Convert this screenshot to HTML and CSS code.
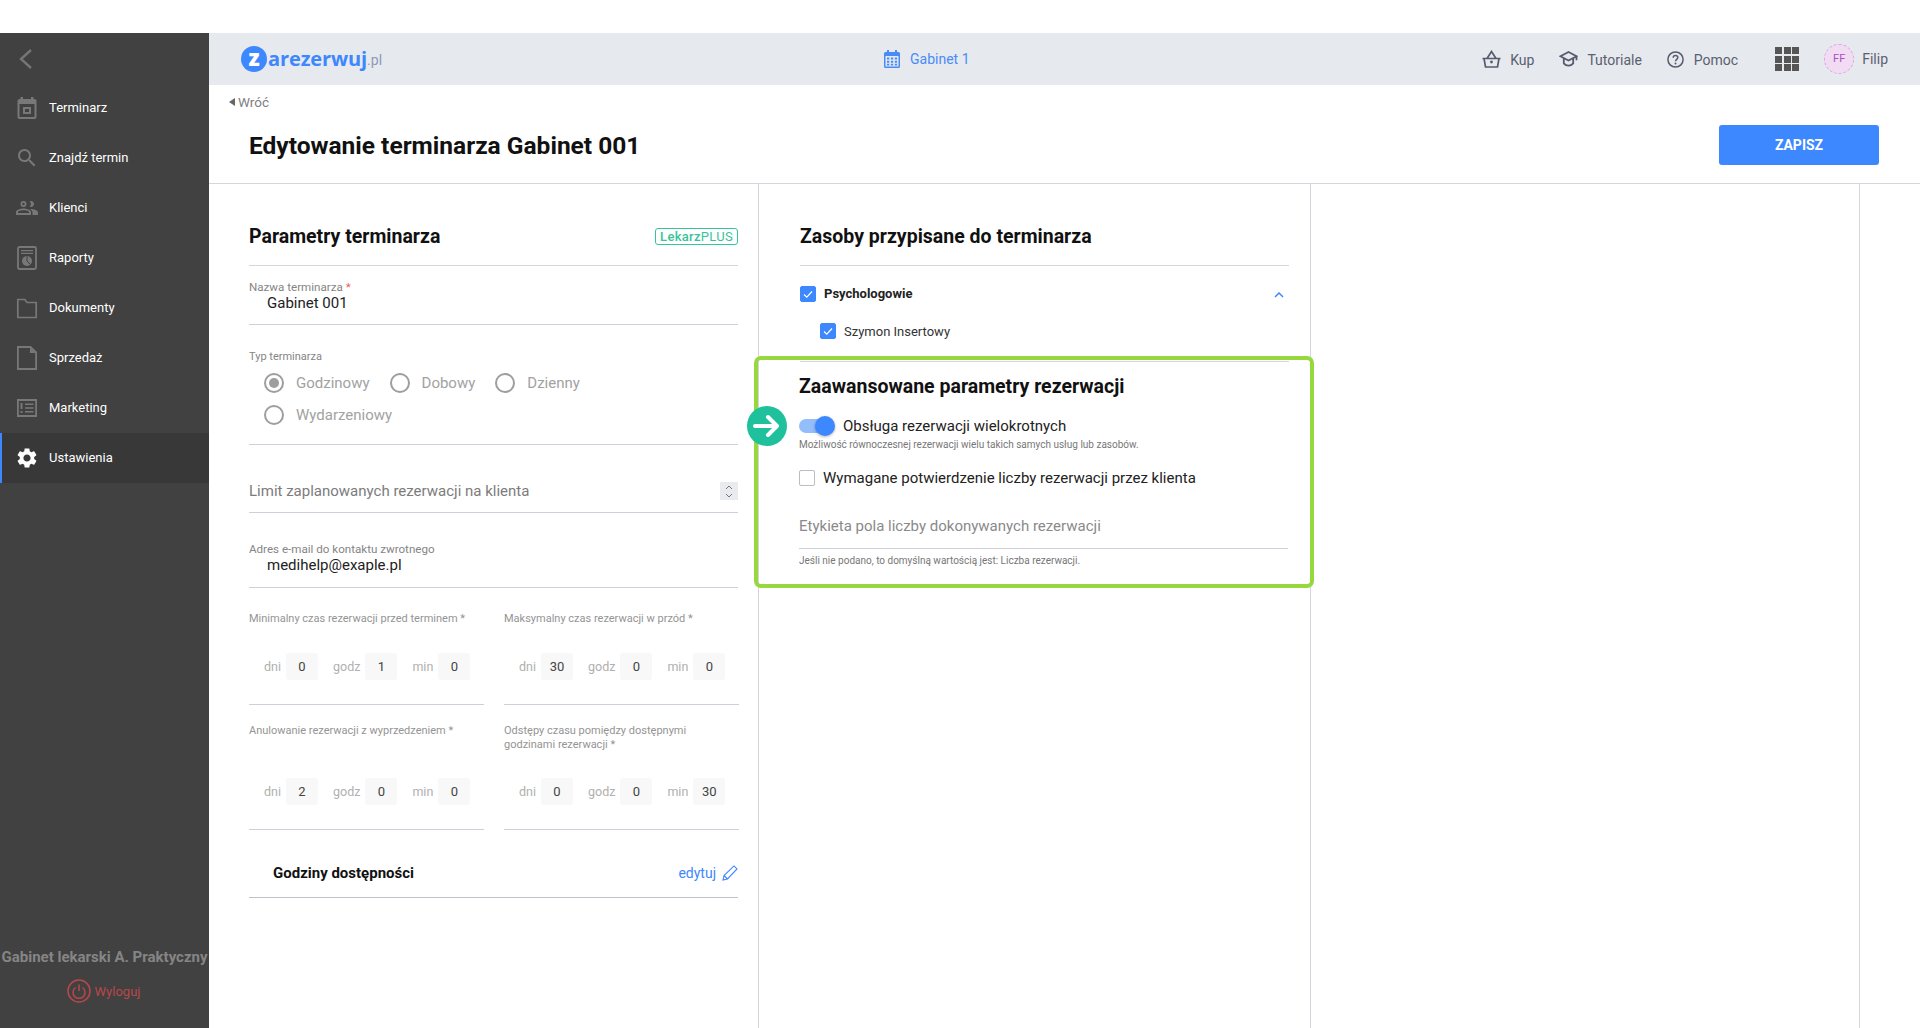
FILE: index.html
```html
<!DOCTYPE html>
<html lang="pl">
<head>
<meta charset="utf-8">
<title>Edytowanie terminarza</title>
<link rel="stylesheet" href="styles.css">
</head>
<body>
<div class="app">
  <aside class="sidebar">
    <div class="back">
      <svg width="16" height="22" viewBox="0 0 16 22"><path d="M13 2 3 11l10 9" fill="none" stroke="#757575" stroke-width="2.400"/></svg>
    </div>
    <nav class="nav">
      <a class="nav-item"><svg class="nav-icon" viewBox="0 0 24 24"><path fill="#787878" d="M16 1v2H8V1H5.500v2H4.600C3.200 3 2.500 4 2.500 5v16c0 1.100.9 2 2 2h15c1.100 0 2-.9 2-2V5c0-1.100-.9-2-2-2h-1V1h-2.500zm3.500 20h-15V8h15v13zM8 11h8v7H8v-7zm2 2v3h4v-3h-4z"/></svg><span>Terminarz</span></a>
      <a class="nav-item"><svg class="nav-icon" viewBox="0 0 24 24"><path fill="#787878" d="M15.500 14h-.79l-.28-.27C15.410 12.590 16 11.110 16 9.500 16 5.910 13.090 3 9.500 3S3 5.910 3 9.500 5.910 16 9.500 16c1.610 0 3.090-.59 4.230-1.570l.27.280v.79l5 4.990L20.490 19l-4.990-5zm-6 0C7.010 14 5 11.990 5 9.500S7.010 5 9.500 5 14 7.010 14 9.500 11.990 14 9.500 14z"/></svg><span>Znajdź termin</span></a>
      <a class="nav-item"><svg class="nav-icon" viewBox="0 0 24 24"><path fill="#787878" d="M16 11c1.660 0 2.990-1.340 2.990-3S17.660 5 16 5c-.5 0-1 .12-1.400.34.800.7 1.300 1.600 1.300 2.660s-.5 2-1.300 2.660c.4.220.9.340 1.400.340zM8.500 11a3 3 0 1 0 0-6 3 3 0 0 0 0 6zm0-1.800a1.200 1.200 0 1 1 0-2.400 1.200 1.200 0 0 1 0 2.400zm0 3.300c-2.500 0-7.500 1.200-7.500 3.600V19h15v-2.900c0-2.400-5-3.600-7.500-3.600zm-5.500 4.500v-.9c0-1 3.200-1.800 5.500-1.800s5.500.8 5.500 1.800v.9H3zm13-4c-.3 0-.6 0-1 .05 1.200.850 2.500 1.900 2.500 3.450V19h5.500v-2.500c0-2.330-4.670-3.500-7-3.500z"/></svg><span>Klienci</span></a>
      <a class="nav-item"><svg class="nav-icon" viewBox="0 0 24 24"><rect x="3" y="1" width="18" height="22" rx="1.500" fill="none" stroke="#787878" stroke-width="1.800"/><path fill="#787878" d="M6 4h12v1.300H6zM6 6.800h12v1.300H6z"/><circle cx="12" cy="15" r="5" fill="#787878"/><path d="M12 15v-5M12 15l3.500 3.500" stroke="#414141" fill="none"/></svg><span>Raporty</span></a>
      <a class="nav-item"><svg class="nav-icon" viewBox="0 0 24 24"><path fill="none" stroke="#787878" stroke-width="1.700" d="M2.800 3.500h7l2.200 3h9.200V21.500H2.800z"/></svg><span>Dokumenty</span></a>
      <a class="nav-item"><svg class="nav-icon" viewBox="0 0 24 24"><path fill="none" stroke="#787878" stroke-width="1.800" d="M2.900 1h12.600L21.100 6.500V23H2.900z"/><path fill="#787878" d="M15 1.500 20.500 7H15z"/></svg><span>Sprzedaż</span></a>
      <a class="nav-item"><svg class="nav-icon" viewBox="0 0 24 24"><path fill="none" stroke="#787878" stroke-width="1.800" d="M2.900 4h18.200v16H2.900z"/><path fill="#787878" d="M5.500 7h2v6h-2zM5.500 15h2v2h-2zM10 7.500h8.500V9H10zM10 11.300h8.500v1.500H10zM10 15h8.500v1.500H10z"/></svg><span>Marketing</span></a>
      <a class="nav-item nav-item-active"><svg class="nav-icon" viewBox="0 0 24 24"><path fill="#fff" d="M19.140 12.940c.04-.3.06-.61.06-.94 0-.32-.02-.64-.07-.94l2.030-1.580c.18-.14.23-.41.12-.61l-1.920-3.320c-.12-.22-.37-.29-.59-.22l-2.390.96c-.5-.38-1.030-.7-1.620-.94l-.36-2.540c-.04-.24-.24-.41-.48-.41h-3.840c-.24 0-.43.17-.47.41l-.36 2.540c-.59.24-1.130.57-1.620.94l-2.390-.96c-.22-.08-.47 0-.59.22L2.740 8.870c-.12.21-.08.47.12.61l2.030 1.580c-.05.3-.09.63-.09.94s.02.64.07.94l-2.030 1.580c-.18.14-.23.41-.12.61l1.920 3.320c.12.22.37.29.59.22l2.390-.96c.5.38 1.030.7 1.620.94l.36 2.540c.05.24.24.41.48.41h3.840c.24 0 .44-.17.47-.41l.36-2.540c.59-.24 1.130-.56 1.620-.94l2.390.96c.22.08.47 0 .59-.22l1.920-3.320c.12-.22.07-.47-.12-.61l-2.010-1.580zM12 15.600c-1.980 0-3.600-1.620-3.600-3.600s1.620-3.600 3.600-3.600 3.600 1.620 3.600 3.600-1.620 3.600-3.600 3.600z"/></svg><span>Ustawienia</span></a>
    </nav>
    <div class="side-foot">
      <div class="clinic">Gabinet lekarski A. Praktyczny</div>
      <div class="logout">
        <svg width="24" height="24" viewBox="0 0 24 24"><circle cx="12" cy="12" r="11" fill="none" stroke="#b9474b" stroke-width="1.500"/><path d="M8.500 8.500a6 6 0 1 0 7 0M12 5.500V12" fill="none" stroke="#b9474b" stroke-width="1.500"/></svg>
        <span>Wyloguj</span>
      </div>
    </div>
  </aside>

  <div class="main">
    <header class="topbar">
      <div class="logo">
        <span class="logo-z">z</span><span class="logo-text">arezerwuj</span><span class="logo-pl">.pl</span>
      </div>
      <div class="current">
        <svg width="16" height="18" viewBox="0 0 16 18"><path fill="#4a8cf7" d="M3 0h2v2h6V0h2v2h1.500A1.500 1.500 0 0 1 16 3.500v13a1.500 1.500 0 0 1-1.500 1.500h-13A1.500 1.500 0 0 1 0 16.500v-13A1.500 1.500 0 0 1 1.500 2H3V0zM1.500 6v10.500h13V6h-13z"/><path fill="#4a8cf7" d="M3 7.500h2.300v2H3zM6.900 7.500h2.300v2H6.900zM10.800 7.500h2.300v2h-2.300zM3 10.700h2.300v2H3zM6.900 10.700h2.300v2H6.900zM10.800 10.700h2.300v2h-2.300zM3 13.800h2.300v1.700H3zM6.900 13.800h2.300v1.700H6.900zM10.800 13.800h2.300v1.700h-2.300z"/></svg>
        <span>Gabinet 1</span>
      </div>
      <div class="tools">
        <a class="tool tool-kup">
          <svg width="19" height="18" viewBox="0 0 19 18"><path d="M.5 8.500h18M2 8.500l1.500 8.500h12L17 8.500M5 8.500 9.500 1.500 14 8.500" fill="none" stroke="#565c6e" stroke-width="1.700"/><circle cx="9.500" cy="12" r="1.400" fill="#565c6e"/></svg>
          <span>Kup</span>
        </a>
        <a class="tool tool-tut">
          <svg width="19" height="18" viewBox="0 0 19 18"><path d="M9.500 2 1.500 6.300l8 4.300 8-4.300zM4.800 8.400v5c1.200 1.500 3 2.300 4.700 2.300s3.500-.8 4.700-2.300v-5M17.500 6.300v4" fill="none" stroke="#565c6e" stroke-width="1.800"/></svg>
          <span>Tutoriale</span>
        </a>
        <a class="tool tool-help">
          <svg width="17" height="17" viewBox="0 0 17 17"><circle cx="8.500" cy="8.500" r="7.600" fill="none" stroke="#565c6e" stroke-width="1.500"/><path d="M6.200 6.700c0-1.300 1-2.200 2.300-2.200s2.300.9 2.300 2.100c0 1.800-2.300 1.700-2.300 3.600" fill="none" stroke="#565c6e" stroke-width="1.500"/><circle cx="8.500" cy="12.400" r="1" fill="#565c6e"/></svg>
          <span>Pomoc</span>
        </a>
        <div class="apps"><i></i><i></i><i></i><i></i><i></i><i></i><i></i><i></i><i></i></div>
        <div class="avatar">FF</div>
        <span class="user">Filip</span>
      </div>
    </header>

    <div class="page-head">
      <a class="back-link"><span class="back-caret"></span>Wróć</a>
      <div class="title-row">
        <h1>Edytowanie terminarza Gabinet 001</h1>
        <button class="save">ZAPISZ</button>
      </div>
    </div>

    <div class="columns">
      <section class="col col-params">
        <div class="sec-head">
          <h2>Parametry terminarza</h2>
          <span class="badge"><b>Lekarz</b>PLUS</span>
        </div>
        <div class="field field-name">
          <div class="lbl lbl-lg">Nazwa terminarza <em>*</em></div>
          <div class="val">Gabinet 001</div>
        </div>
        <div class="field field-type">
          <div class="lbl">Typ terminarza</div>
          <div class="radios">
            <span class="radio radio-on"><i></i>Godzinowy</span>
            <span class="radio"><i></i>Dobowy</span>
            <span class="radio"><i></i>Dzienny</span>
            <span class="radio"><i></i>Wydarzeniowy</span>
          </div>
        </div>
        <div class="field field-limit">
          <span>Limit zaplanowanych rezerwacji na klienta</span>
          <span class="stepper">
            <svg width="10" height="15" viewBox="0 0 10 15"><path d="M2 5l3-3 3 3M2 10l3 3 3-3" fill="none" stroke="#777" stroke-width="1"/></svg>
          </span>
        </div>
        <div class="field field-mail">
          <div class="lbl lbl-lg">Adres e-mail do kontaktu zwrotnego</div>
          <div class="val">medihelp@exaple.pl</div>
        </div>
        <div class="times">
          <div class="time time-a">
            <div class="lbl">Minimalny czas rezerwacji przed terminem *</div>
            <div class="dhm"><span>dni</span><b>0</b><span>godz</span><b>1</b><span>min</span><b>0</b></div>
          </div>
          <div class="time time-a">
            <div class="lbl">Maksymalny czas rezerwacji w przód *</div>
            <div class="dhm"><span>dni</span><b>30</b><span>godz</span><b>0</b><span>min</span><b>0</b></div>
          </div>
          <div class="time">
            <div class="lbl">Anulowanie rezerwacji z wyprzedzeniem *</div>
            <div class="dhm"><span>dni</span><b>2</b><span>godz</span><b>0</b><span>min</span><b>0</b></div>
          </div>
          <div class="time">
            <div class="lbl">Odstępy czasu pomiędzy dostępnymi godzinami rezerwacji *</div>
            <div class="dhm"><span>dni</span><b>0</b><span>godz</span><b>0</b><span>min</span><b>30</b></div>
          </div>
        </div>
        <div class="hours">
          <strong>Godziny dostępności</strong>
          <a class="edit">edytuj
            <svg width="16" height="16" viewBox="0 0 16 16"><path d="M1 15l1-4.500L12 .9l3 3L5.500 14zM2 10.500 5.500 14" fill="none" stroke="#3d87ff" stroke-width="1.100"/></svg>
          </a>
        </div>
      </section>

      <section class="col col-res">
        <div class="sec-head"><h2>Zasoby przypisane do terminarza</h2></div>
        <div class="group-row">
          <span class="check check-on"><svg width="16" height="16" viewBox="0 0 16 16"><path d="M4 8.500l2.800 2.700L12 5.500" fill="none" stroke="#fff" stroke-width="1.200"/></svg></span>
          <strong>Psychologowie</strong>
          <svg class="chev" width="10" height="6" viewBox="0 0 10 6"><path d="M1 5l4-4 4 4" fill="none" stroke="#3d87ff" stroke-width="1.500"/></svg>
        </div>
        <div class="child-row">
          <span class="check check-on"><svg width="16" height="16" viewBox="0 0 16 16"><path d="M4 8.500l2.800 2.700L12 5.500" fill="none" stroke="#fff" stroke-width="1.200"/></svg></span>
          <span>Szymon Insertowy</span>
        </div>
        <div class="divider"></div>
        <div class="adv">
          <h2 class="adv-title">Zaawansowane parametry rezerwacji</h2>
          <div class="toggle-row">
            <span class="toggle"><i></i></span>
            <span>Obsługa rezerwacji wielokrotnych</span>
          </div>
          <div class="sub">Możliwość równoczesnej rezerwacji wielu takich samych usług lub zasobów.</div>
          <div class="confirm-row">
            <span class="check"></span>
            <span>Wymagane potwierdzenie liczby rezerwacji przez klienta</span>
          </div>
          <div class="adv-input">Etykieta pola liczby dokonywanych rezerwacji</div>
          <div class="hint">Jeśli nie podano, to domyślną wartością jest: Liczba rezerwacji.</div>
        </div>
        <div class="highlight"></div>
        <div class="arrow">
          <svg width="28" height="24" viewBox="0 0 28 24"><path d="M2 12h22M15 3l9 9-9 9" fill="none" stroke="#fff" stroke-width="4" stroke-linecap="round" stroke-linejoin="round"/></svg>
        </div>
      </section>

      <section class="col col-empty"></section>
      <section class="col-rest"></section>
    </div>
  </div>
</div>
</body>
</html>
```

FILE: styles.css
```css
* { box-sizing: border-box; }
html, body { margin: 0; height: 100%; }
body { background: #fff; font-family: Roboto, "Liberation Sans", sans-serif; color: #222; overflow: hidden; }
h1, h2 { margin: 0; }
a { color: inherit; text-decoration: none; }

.app { display: flex; height: 1028px; padding-top: 33px; }

/* sidebar */
.sidebar { width: 209px; flex: none; background: #414141; display: flex; flex-direction: column; }
.back { height: 50px; padding: 2px 0 0 18px; display: flex; align-items: center; }
.nav { display: flex; flex-direction: column; }
.nav-item { height: 50px; display: flex; align-items: center; padding-left: 15px; gap: 10px; color: #fff; font-size: 13px; }
.nav-item span { padding-bottom: 2px; }
.nav-icon { width: 24px; height: 24px; flex: none; }
.nav-item-active { background: #383838; border-left: 2px solid #3d87ff; padding-left: 13px; }
.side-foot { margin-top: auto; padding-bottom: 24px; text-align: center; }
.clinic { color: #858585; font-size: 15px; font-weight: 700; line-height: 20px; white-space: nowrap; }
.logout { margin-top: 11px; margin-left: -2px; display: flex; justify-content: center; align-items: center; gap: 4px; color: #b9474b; font-size: 13px; height: 26px; }

/* main */
.main { flex: 1; min-width: 0; display: flex; flex-direction: column; }
.topbar { height: 52px; flex: none; background: #e6e9ee; display: flex; align-items: center; padding: 0 32px; }
.logo { width: 643px; flex: none; display: flex; align-items: center; margin-top: -1px; }
.logo-z { width: 26px; height: 26px; border-radius: 50%; background: #3d87ff; color: #fff; font: 800 22px/23px "Open Sans", sans-serif; text-align: center; }
.logo-text { margin-left: 1px; color: #3d87ff; font: 700 20px/26px "Open Sans", sans-serif; letter-spacing: -.1px; }
.logo-pl { color: #8d9ab5; font: 400 14px/26px Roboto, sans-serif; padding-top: 3px; }
.current { display: flex; align-items: center; gap: 10px; color: #4a8cf7; font-size: 14px; }
.tools { margin-left: auto; display: flex; align-items: center; color: #5a6070; font-size: 14px; }
.tool { display: flex; align-items: center; gap: 9px; margin-right: 25px; }
.tool span { padding-top: 2px; }
.tool-tut { gap: 9px; }
.tool-help { gap: 10px; margin-right: 37px; }
.apps { display: grid; grid-template-columns: repeat(3, 7px); grid-auto-rows: 7px; gap: 1.500px; margin-right: 25px; }
.apps i { background: #555; }
.avatar { width: 30px; height: 30px; border-radius: 50%; background: #f1dcf3; border: 1px dashed #d9a8dc; color: #a94fc4; font-size: 11px; line-height: 28px; text-align: center; margin-right: 8px; }

.page-head { height: 99px; flex: none; border-bottom: 1px solid #d3d6dc; padding: 7px 41px 0 20px; }
.back-link { display: flex; align-items: center; color: #7f7f7f; font-size: 13.500px; line-height: 20px; }
.back-caret { width: 0; height: 0; border: 4px solid transparent; border-right: 6px solid #666; border-left: 0; margin-right: 3px; }
.title-row { margin-top: 13px; padding-left: 20px; height: 40px; display: flex; align-items: center; justify-content: space-between; }
h1 { font-size: 24.500px; font-weight: 700; color: #111; }
.save { width: 160px; height: 40px; border: 0; border-radius: 3px; background: #3d87ff; color: #fff; font: 700 14px Roboto, sans-serif; }

.columns { flex: 1; display: flex; min-height: 0; }
.col { border-right: 1px solid #d3d6dc; position: relative; }
.col-params { width: 550px; flex: none; padding: 0 20px 0 40px; }
.col-res { width: 552px; flex: none; padding: 0 21px 0 41px; }
.col-empty { width: 549px; flex: none; }
.col-rest { flex: 1; }

.sec-head { height: 82px; border-bottom: 1px solid #d3d6dc; display: flex; align-items: center; justify-content: space-between; padding-top: 24px; }
h2 { font-size: 19.500px; font-weight: 700; color: #111; }
.badge { border: 1px solid #36c49b; border-radius: 3px; color: #36c49b; font-size: 13px; line-height: 15px; padding: 0 4px; letter-spacing: .3px; }
.badge b { font-weight: 500; }

.field { border-bottom: 1px solid #ccd1d9; }
.lbl { font-size: 11px; line-height: 14px; color: #858585; }
.lbl-lg { font-size: 11.600px; }
.lbl em { color: #ef5b5b; font-style: normal; }
.val { padding-left: 18px; font-size: 15px; line-height: 20px; color: #222; }
.field-name { height: 59px; padding-top: 14px; }
.field-name .val { margin-top: -1px; }
.field-type { height: 120px; padding-top: 25px; }
.radios { display: flex; flex-wrap: wrap; width: 360px; padding: 3px 0 0 15px; column-gap: 20px; }
.radio { height: 32px; display: flex; align-items: center; gap: 12px; font-size: 15px; color: #a2a2a2; }
.radio i { width: 20px; height: 20px; border-radius: 50%; border: 2px solid #9e9e9e; display: flex; align-items: center; justify-content: center; }
.radio-on i::after { content: ""; width: 10px; height: 10px; border-radius: 50%; background: #9e9e9e; }
.field-limit { height: 68px; padding: 36px 0 11px; display: flex; align-items: center; justify-content: space-between; font-size: 15px; line-height: 20px; color: #7c7c7c; }
.stepper { width: 18px; height: 18px; background: #e9ebef; display: flex; align-items: center; justify-content: center; }
.field-mail { height: 75px; padding-top: 29px; }
.field-mail .val { margin-top: -1px; }

.times { display: grid; grid-template-columns: 235px 235px; column-gap: 20px; grid-template-rows: 117px 125px; }
.time { padding: 19px 0 24px; border-bottom: 1px solid #ccd1d9; display: flex; flex-direction: column; justify-content: space-between; }
.time-a { padding-top: 24px; }
.time .lbl { color: #949494; }
.dhm { display: flex; align-items: center; padding-left: 15px; font-size: 12.500px; color: #b0b0b0; }
.dhm span { margin-right: 5px; }
.dhm b { width: 32px; height: 27px; margin-right: 15px; border-radius: 3px; background: #f8f8f8; color: #444; font-weight: 400; font-size: 13px; line-height: 27px; text-align: center; }
.dhm b:last-child { margin-right: 0; }

.hours { height: 68px; padding: 19px 0 0 24px; border-bottom: 1px solid #bfc3c9; display: flex; align-items: center; justify-content: space-between; }
.hours strong { font-size: 15px; font-weight: 700; color: #111; }
.edit { display: flex; align-items: center; gap: 6px; color: #3d87ff; font-size: 14px; }

.check { width: 16px; height: 16px; border-radius: 2px; border: 1px solid #b9bdc4; flex: none; display: block; }
.check svg { display: block; margin: -1px; }
.check-on { background: #3d87ff; border-color: #3d87ff; }
.group-row { height: 56px; display: flex; align-items: center; gap: 8px; font-size: 13px; }
.group-row strong { font-weight: 700; color: #222; padding-bottom: 2px; }
.chev { margin-left: auto; margin-right: 5px; margin-top: 2px; }
.child-row { height: 18px; padding-left: 20px; display: flex; align-items: center; gap: 8px; font-size: 13px; color: #333; }
.divider { margin-top: 21px; height: 1px; background: #d3d6dc; }

.adv { margin-left: -1px; padding-top: 12px; }
.adv-title { line-height: 25px; }
.toggle-row { margin-top: 17px; height: 20px; display: flex; align-items: center; gap: 8px; font-size: 15px; color: #222; }
.toggle { width: 32px; height: 14px; margin-right: 4px; border-radius: 7px; background: #94bdfb; position: relative; flex: none; }
.toggle i { position: absolute; right: -4px; top: -3px; width: 20px; height: 20px; border-radius: 50%; background: #3d87ff; box-shadow: 0 1px 3px rgba(0,0,0,.3); }
.sub { margin-top: 2px; font-size: 10px; line-height: 14px; color: #777; }
.confirm-row { margin-top: 16px; height: 20px; display: flex; align-items: center; gap: 8px; font-size: 15px; color: #222; }
.adv-input { margin-top: 28px; width: 489px; padding-bottom: 12px; border-bottom: 1px solid #ccd1d9; font-size: 15px; line-height: 20px; color: #8a8a8a; }
.hint { margin-top: 5px; font-size: 10px; line-height: 14px; color: #777; }

.highlight { position: absolute; left: -5px; top: 172px; width: 560px; height: 232px; border: 4px solid #96d83e; border-radius: 7px; pointer-events: none; }
.arrow { position: absolute; left: -12px; top: 222px; width: 40px; height: 40px; border-radius: 50%; background: #1fc19c; display: flex; align-items: center; justify-content: center; }
```
